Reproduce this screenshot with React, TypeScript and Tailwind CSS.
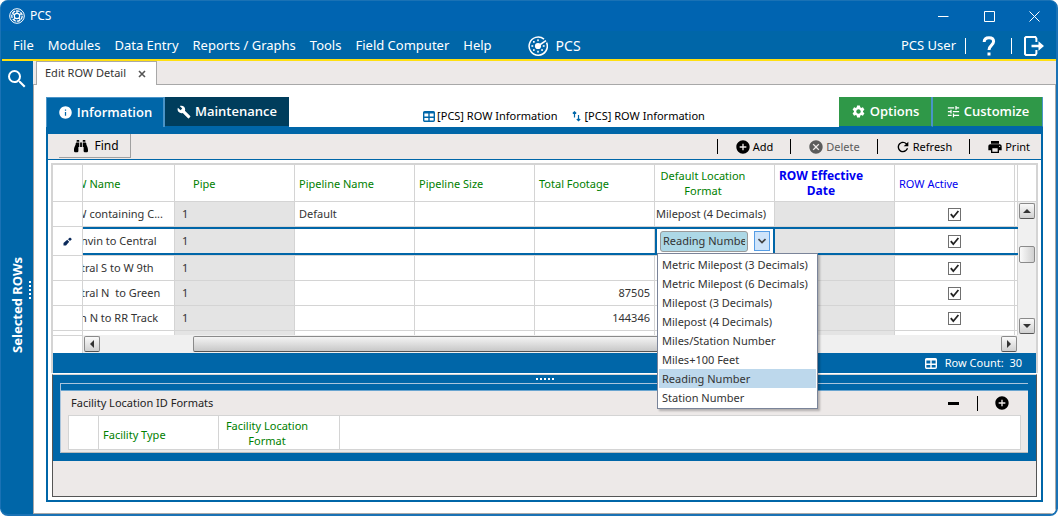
import type { ReactNode } from "react";
import {
  MdSearch,
  MdInfo,
  MdBuild,
  MdSettings,
  MdTune,
  MdAddCircle,
  MdCancel,
  MdRefresh,
  MdPrint,
} from "react-icons/md";
import { FaBinoculars } from "react-icons/fa";

const menus = ["File", "Modules", "Data Entry", "Reports / Graphs", "Tools", "Field Computer", "Help"];

const formats = [
  "Metric Milepost (3 Decimals)",
  "Metric Milepost (6 Decimals)",
  "Milepost (3 Decimals)",
  "Milepost (4 Decimals)",
  "Miles/Station Number",
  "Miles+100 Feet",
  "Reading Number",
  "Station Number",
];

type Row = { name: string; pipeline?: string; footage?: string; format?: string };

const rows: Row[] = [
  { name: "ROW containing C...", pipeline: "Default", format: "Milepost (4 Decimals)" },
  { name: "Chanvin to Central" },
  { name: "Central S to W 9th" },
  { name: "Central N \u00a0to Green", footage: "87505" },
  { name: "Main N to RR Track", footage: "144346" },
];

function WheelLogo() {
  return (
    <svg viewBox="0 0 16 16" className="size-4" fill="none" stroke="white" aria-hidden="true">
      <circle cx="8" cy="8" r="7.3" strokeWidth="1" />
      <circle cx="8" cy="8" r="5.2" strokeWidth="1.3" strokeDasharray="3.6 1" />
      <circle cx="8" cy="8" r="2.7" strokeWidth="1.2" />
      <path d="M8 5.3V3M10.3 6.8l2.2-1.4M9.8 10l1.6 2M6.2 10l-1.6 2M5.6 6.8L3.4 5.4" strokeWidth="1.2" />
    </svg>
  );
}

function RadarLogo() {
  return (
    <svg viewBox="0 0 20 20" className="size-5" fill="none" stroke="white" aria-hidden="true">
      <path d="M18.6 6.6A9.1 9.1 0 1 1 16 3.1" strokeWidth="1.5" />
      <path d="M10 10L18 4.6" strokeWidth="1.6" />
      <circle cx="10" cy="10" r="3.1" fill="white" stroke="none" />
      <g fill="white" stroke="none">
        <rect x="9.2" y="3.4" width="1.6" height="1.8" />
        <rect x="9.2" y="14.8" width="1.6" height="1.8" />
        <rect x="3.4" y="9.2" width="1.8" height="1.6" />
        <rect x="14.8" y="9.2" width="1.8" height="1.6" />
        <rect x="5" y="5" width="1.7" height="1.7" />
        <rect x="5" y="13.2" width="1.7" height="1.7" />
        <rect x="13.2" y="13.2" width="1.7" height="1.7" />
      </g>
    </svg>
  );
}

function TableIcon() {
  return (
    <svg viewBox="0 0 12 11" className="h-[11px] w-3 shrink-0" fill="none" stroke="currentColor" aria-hidden="true">
      <rect x="0.7" y="0.7" width="10.6" height="9.6" rx="1" strokeWidth="1.4" />
      <path d="M0.7 1.6H11.3" strokeWidth="1.8" />
      <path d="M6 2V10M1 6.2H11" strokeWidth="1.4" />
    </svg>
  );
}

function SortIcon() {
  return (
    <svg viewBox="0 0 9 11" className="h-[11px] w-[9px] shrink-0" fill="none" stroke="currentColor" strokeWidth="1.2" aria-hidden="true">
      <path d="M2.5 6.5V0.8M0.8 2.5L2.5 0.8L4.200 2.5M6.5 4V9.700M4.800 8L6.5 9.700L8.200 8" />
    </svg>
  );
}

function PencilIcon() {
  return (
    <svg viewBox="0 0 9 9" className="size-[9px]" fill="#0b2a5b" aria-hidden="true">
      <path d="M0.500 8.500V6L4.200 2.800L6.200 4.800L3 8.500Z" />
      <path d="M5 2.200L6.600 0.700H7.500L8.500 1.700V2.500L7 4.100Z" />
    </svg>
  );
}

function ExitIcon() {
  return (
    <svg viewBox="0 0 20 20" className="size-5" aria-hidden="true">
      <path d="M12.4 6V2.5L11.4 1H2L1 2v16l1 1h9.400l1-1.500V14" fill="none" stroke="white" strokeWidth="2" />
      <path d="M7.500 8.800h7V5.300L20 10l-5.500 4.700v-3.500h-7z" fill="white" />
    </svg>
  );
}

function Triangle({ d }: { d: string }) {
  return (
    <svg viewBox="0 0 8 8" className="size-2" fill="#333" aria-hidden="true">
      <path d={d} />
    </svg>
  );
}

function ScrollButton({ label, d }: { label: string; d: string }) {
  return (
    <button
      aria-label={label}
      className="flex h-4 w-4 shrink-0 items-center justify-center rounded-[2px] border border-[#8a8a8a] border-b-[#555] bg-gradient-to-b from-[#fafafa] to-[#d0d0d0]"
    >
      <Triangle d={d} />
    </button>
  );
}

function Bar({ className }: { className: string }) {
  return <span aria-hidden="true" className={`w-px shrink-0 ${className}`} />;
}

function Tool({ icon, children, muted }: { icon: ReactNode; children: string; muted?: boolean }) {
  return (
    <button className={`flex items-center gap-[2px] ${muted ? "text-[#5c5c5c]" : "text-black"}`}>
      {icon}
      {children}
    </button>
  );
}

function ActiveBox({ name }: { name: string }) {
  return (
    <label className="relative mx-auto flex size-[13px] items-center justify-center">
      <input
        type="checkbox"
        defaultChecked
        aria-label={`${name} active`}
        className="peer size-[13px] appearance-none border border-[#707070] bg-white"
      />
      <svg
        viewBox="0 0 13 13"
        className="pointer-events-none absolute inset-0 size-[13px] opacity-0 peer-checked:opacity-100"
        fill="none"
        stroke="#222"
        strokeWidth="1.8"
        aria-hidden="true"
      >
        <path d="M2.800 6.200L5.300 9.200L10.400 3" />
      </svg>
    </label>
  );
}

function FormatPicker() {
  return (
    <div className="relative flex h-full items-center gap-[6px] border-x-2 border-[#0066a8] bg-white px-[3px]">
      <select
        aria-label="Default location format"
        defaultValue="Reading Number"
        className="h-[21px] min-w-0 flex-1 appearance-none overflow-hidden rounded-[3px] border border-[#9a9a9a] bg-[#add8e6] px-[2px] text-clip text-[#333]"
      >
        {formats.map((f) => (
          <option key={f}>{f}</option>
        ))}
      </select>
      <button
        aria-label="Show formats"
        className="flex h-5 w-4 shrink-0 items-center justify-center border border-[#569de5] bg-[#cfe4fa]"
      >
        <svg viewBox="0 0 8 6" className="h-[6px] w-2" fill="none" stroke="#444" strokeWidth="1.600" aria-hidden="true">
          <path d="M0.500 1L4 4.500L7.500 1" />
        </svg>
      </button>
      <ul
        role="listbox"
        aria-label="Formats"
        className="absolute left-0 top-6 z-10 w-[161px] border border-[#7a8499] bg-white p-px shadow-[2px_2px_2px_rgba(0,0,0,0.25)]"
      >
        {formats.map((f) => (
          <li
            key={f}
            role="option"
            aria-selected={f === "Reading Number"}
            className="h-[19px] whitespace-nowrap pl-[3px] leading-[19px] text-[#333] aria-selected:bg-[#bdd8ec]"
          >
            {f}
          </li>
        ))}
      </ul>
    </div>
  );
}

function Grid() {
  const head = "border-b border-r border-[#d4d4d4] p-0 font-normal";
  return (
    <table className="w-full table-fixed border-separate border-spacing-0 text-[#333]">
      <colgroup>
        <col className="w-[30px]" />
        <col className="w-[92px]" />
        <col className="w-[120px]" />
        <col className="w-[120px]" />
        <col className="w-[120px]" />
        <col className="w-[120px]" />
        <col className="w-[120px]" />
        <col className="w-[120px]" />
        <col className="w-[120px]" />
        <col />
      </colgroup>
      <thead>
        <tr className="h-[37px] text-left leading-[15px] text-[#008000]">
          <th className={head} aria-label="Row state" />
          <th className={head}>
            <div className="overflow-hidden whitespace-nowrap">
              <div className="-ml-[22px]">ROW Name</div>
            </div>
          </th>
          <th className={head}>
            <div className="pl-[18px]">Pipe</div>
          </th>
          <th className={head}>
            <div className="pl-1">Pipeline Name</div>
          </th>
          <th className={head}>
            <div className="pl-1">Pipeline Size</div>
          </th>
          <th className={head}>
            <div className="pl-1">Total Footage</div>
          </th>
          <th className={head}>
            <div className="w-24 text-center">Default Location Format</div>
          </th>
          <th className={head}>
            <div className="w-[92px] text-center text-xs font-bold leading-[15px] text-[#0000f0]">ROW Effective Date</div>
          </th>
          <th className={head}>
            <div className="pl-1 text-[#0000f0]">ROW Active</div>
          </th>
          <th className={head} aria-label="Spare" />
        </tr>
      </thead>
      <tbody>
        {rows.map((r, i) => {
          const edit = i === 1;
          const cell = "border-b border-[#d4d4d4] p-0";
          const box = edit
            ? "flex h-7 items-stretch border-y-2 border-[#0066a8]"
            : "flex h-6 items-stretch";
          const inner = "flex min-w-0 flex-1 items-center overflow-hidden whitespace-nowrap border-r border-[#d4d4d4]";
          return (
            <tr key={r.name}>
              <td className={cell}>
                <div className={`flex items-center justify-center border-r border-[#d4d4d4] ${edit ? "h-7" : "h-6"}`}>
                  {edit && <PencilIcon />}
                </div>
              </td>
              <td className={cell}>
                <div className={box}>
                  <div className={inner}>
                    <span className="-ml-[22px]">{r.name}</span>
                  </div>
                </div>
              </td>
              <td className={`${cell} bg-[#e4e4e4]`}>
                <div className={box}>
                  <div className={`${inner} pl-[7px]`}>1</div>
                </div>
              </td>
              <td className={cell}>
                <div className={box}>
                  <div className={`${inner} pl-1`}>{r.pipeline}</div>
                </div>
              </td>
              <td className={cell}>
                <div className={box}>
                  <div className={inner} />
                </div>
              </td>
              <td className={cell}>
                <div className={box}>
                  <div className={`${inner} justify-end pr-1`}>{r.footage}</div>
                </div>
              </td>
              <td className={cell}>
                <div className={box}>
                  {edit ? (
                    <div className="min-w-0 flex-1">
                      <FormatPicker />
                    </div>
                  ) : (
                    <div className={`${inner} pl-px`}>{r.format}</div>
                  )}
                </div>
              </td>
              <td className={`${cell} bg-[#e4e4e4]`}>
                <div className={box}>
                  <div className={inner} />
                </div>
              </td>
              <td className={cell}>
                <div className={box}>
                  <div className={inner}>
                    <ActiveBox name={r.name} />
                  </div>
                </div>
              </td>
              <td className={cell}>
                <div className={box}>
                  <div className={inner} />
                </div>
              </td>
            </tr>
          );
        })}
        <tr className="h-1">
          {["a", "b", "c", "d", "e", "f", "g", "h", "i", "j"].map((k) => (
            <td
              key={k}
              className={`border-r border-[#d4d4d4] p-0 ${k === "c" || k === "h" ? "bg-[#e4e4e4]" : ""}`}
            />
          ))}
        </tr>
      </tbody>
    </table>
  );
}

export default function App() {
  return (
    <div className="min-h-screen bg-white font-['Noto_Sans','Open_Sans',sans-serif] text-[11px]">
      <div className="flex min-h-screen flex-col overflow-hidden rounded-lg border border-b-2 border-r-2 border-[#1a72b5] bg-[#0066a8]">
        <header className="text-white">
          <div className="flex h-[30px] items-center bg-[#0064b1] pl-2">
            <WheelLogo />
            <span className="ml-[5px] text-xs">PCS</span>
            <div className="ml-auto flex items-center">
              <button aria-label="Minimize" className="flex w-[46px] justify-center">
                <svg viewBox="0 0 11 11" className="size-[11px]" stroke="white" aria-hidden="true">
                  <path d="M0 5.500H10.500" />
                </svg>
              </button>
              <button aria-label="Maximize" className="flex w-[46px] justify-center">
                <svg viewBox="0 0 11 11" className="size-[11px]" fill="none" stroke="white" aria-hidden="true">
                  <path d="M0.500 0.500H10.500V10.500H0.500Z" />
                </svg>
              </button>
              <button aria-label="Close" className="flex w-11 justify-center">
                <svg viewBox="0 0 11 11" className="size-[11px]" stroke="white" aria-hidden="true">
                  <path d="M0.500 0.500L10.500 10.500M10.500 0.500L0.500 10.500" />
                </svg>
              </button>
            </div>
          </div>
          <div className="ml-px flex h-[30px] items-center border-b-2 border-[#ffdf10] bg-[#0066a8] pl-[11px] pr-3 pt-[2px] text-[13px]">
            <nav className="flex items-center gap-[14px]">
              {menus.map((m) => (
                <button key={m}>{m}</button>
              ))}
            </nav>
            <div className="ml-9 flex items-center gap-2 text-sm">
              <RadarLogo />
              PCS
            </div>
            <div className="ml-auto flex items-center">
              <span>PCS User</span>
              <Bar className="ml-[9px] h-4 bg-white" />
              <button aria-label="Help" className="ml-4 flex">
                <svg viewBox="0 0 14 20" className="h-5 w-[14px]" fill="none" stroke="white" aria-hidden="true">
                  <path d="M2.200 6C2.200 3 4.200 1.700 7 1.700S11.600 3.200 11.600 5.600C11.600 9 7 9.300 7 14" strokeWidth="3" />
                  <path d="M7 16.500V19.500" strokeWidth="3" />
                </svg>
              </button>
              <Bar className="ml-[15px] mr-3 h-4 bg-white" />
              <button aria-label="Log out" className="flex">
                <ExitIcon />
              </button>
            </div>
          </div>
        </header>

        <div className="flex flex-1">
          <aside className="relative flex w-8 shrink-0 flex-col items-center pr-px text-white">
            <button aria-label="Search" className="mt-[6px]">
              <MdSearch className="size-6" />
            </button>
            <div className="flex flex-1 items-center pt-1">
              <span className="rotate-180 text-[13px] font-bold leading-4 [writing-mode:vertical-rl]">Selected ROWs</span>
            </div>
            <div aria-hidden="true" className="absolute right-[2px] top-[220px] flex flex-col gap-[2px]">
              {[0, 1, 2, 3, 4].map((n) => (
                <span key={n} className="size-[2px] bg-white" />
              ))}
            </div>
          </aside>

          <div className="flex min-w-0 flex-1 flex-col bg-[#ede9e8]">
            <div className="flex h-6 items-end">
              <div className="h-full w-[3px] shrink-0 border-b border-[#a8a8a8]" />
              <div className="flex h-full items-center gap-[10px] border-x border-t border-[#a8a8a8] bg-white px-2 text-[#333]">
                Edit ROW Detail
                <button aria-label="Close tab" className="flex w-3 justify-center">
                  <svg viewBox="0 0 8 8" className="size-2" stroke="#555" strokeWidth="1.600" aria-hidden="true">
                    <path d="M1 1L7 7M7 1L1 7" />
                  </svg>
                </button>
              </div>
              <div className="h-full flex-1 border-b border-[#a8a8a8]" />
            </div>

            <main className="flex flex-1 flex-col border-x border-b border-[#a8a8a8] bg-white px-3 pb-[11px] pt-3">
              <div className="flex h-[30px] items-stretch font-['Open_Sans','Noto_Sans',sans-serif] text-[13px] font-semibold text-white">
                <button className="flex w-[119px] items-center justify-center gap-1 border-l border-r-2 border-t border-[#4a94c8] bg-[#0066a8]">
                  <MdInfo className="size-[15px]" />
                  Information
                </button>
                <button className="flex w-[124px] items-center justify-center gap-1 border-b border-[#0066a8] bg-[#003d5c]">
                  <MdBuild className="size-[14px]" />
                  Maintenance
                </button>
                <div className="flex flex-1 items-end justify-center gap-[14px] pb-1 font-['Noto_Sans','Open_Sans',sans-serif] text-[11px] font-normal leading-[14px] text-black">
                  <span className="flex items-center gap-[2px]">
                    <span className="text-[#0066a8]">
                      <TableIcon />
                    </span>
                    [PCS] ROW Information
                  </span>
                  <span className="flex items-center gap-1">
                    <span className="text-[#0066a8]">
                      <SortIcon />
                    </span>
                    [PCS] ROW Information
                  </span>
                </div>
                <button className="flex w-[94px] items-center justify-center gap-1 border-b border-r-2 border-b-[#0066a8] border-r-[#4a94c8] bg-[#2f9848]">
                  <MdSettings className="size-[15px]" />
                  Options
                </button>
                <button className="flex w-[110px] items-center justify-center gap-[3px] border-b border-r border-b-[#0066a8] border-r-[#4a94c8] bg-[#2f9848]">
                  <MdTune className="size-[15px]" />
                  Customize
                </button>
              </div>

              <section className="flex flex-1 flex-col border-2 border-t-[7px] border-[#0066a8]">
                <div className="flex h-[26px] shrink-0 items-center border-b border-[#0066a8] bg-[#ede9e8] px-[11px] leading-4">
                  <button className="flex h-6 w-[72px] items-center justify-center gap-[6px] self-start border-b border-r border-[#a0a0a0] pl-1 text-xs text-black">
                    <FaBinoculars className="size-[14px]" />
                    Find
                  </button>
                  <div className="ml-auto flex items-center gap-[17px]">
                    <Bar className="h-[15px] bg-black" />
                    <Tool icon={<MdAddCircle className="size-4" />}>Add</Tool>
                    <Bar className="h-[15px] bg-black" />
                    <Tool muted icon={<MdCancel className="size-4" />}>
                      Delete
                    </Tool>
                    <Bar className="h-[15px] bg-black" />
                    <Tool icon={<MdRefresh className="size-4" />}>Refresh</Tool>
                    <Bar className="h-[15px] bg-black" />
                    <Tool icon={<MdPrint className="size-4" />}>Print</Tool>
                  </div>
                </div>

                <div className="flex flex-1 flex-col px-[3px] pb-[3px] pt-[3px]">
                  <div className="border-x-2 border-t-2 border-[#d4d4d4]">
                    <div className="flex">
                      <div className="min-w-0 flex-1">
                        <Grid />
                      </div>
                      <div className="flex w-[18px] shrink-0 flex-col">
                        <div className="h-[37px] border-b border-[#d4d4d4]" />
                        <div className="flex flex-1 flex-col items-center bg-[#f0f0f0] py-px">
                          <ScrollButton label="Scroll up" d="M0 6L4 2L8 6Z" />
                          <div className="mt-[27px] h-[17px] w-4 rounded-[2px] border border-[#8a8a8a] bg-gradient-to-r from-[#fafafa] to-[#d0d0d0]" />
                          <div className="flex-1" />
                          <ScrollButton label="Scroll down" d="M0 2L4 6L8 2Z" />
                        </div>
                      </div>
                    </div>
                    <div className="flex h-[18px]">
                      <div className="w-[30px] shrink-0 border-r border-t border-[#d4d4d4]" />
                      <div className="flex min-w-0 flex-1 items-center bg-[#f0f0f0] px-px">
                        <ScrollButton label="Scroll left" d="M6 0L2 4L6 8Z" />
                        <div className="ml-[93px] h-4 w-[610px] rounded-[2px] border border-[#8a8a8a] border-b-[#555] bg-gradient-to-b from-[#f4f4f4] to-[#c8c8c8]" />
                        <div className="flex-1" />
                        <ScrollButton label="Scroll right" d="M2 0L6 4L2 8Z" />
                      </div>
                      <div className="w-[18px] shrink-0 bg-[#f0f0f0]" />
                    </div>
                    <div className="flex h-5 items-center justify-end gap-2 bg-[#0066a8] pr-[14px] text-white">
                      <TableIcon />
                      <span className="whitespace-pre">Row Count: {" "}30</span>
                    </div>
                  </div>

                  <div className="mx-px mt-px flex flex-1 flex-col border border-[#555] border-t-[#d4d4d4] bg-[#ede9e8]">
                    <div className="bg-[#0066a8] pb-2">
                      <div aria-hidden="true" className="flex h-2 items-center justify-center gap-[2px]">
                        {[0, 1, 2, 3, 4].map((n) => (
                          <span key={n} className="size-[2px] bg-white" />
                        ))}
                      </div>
                      <div className="ml-[7px] mr-2 border-l border-t border-[#a9c4dc]">
                        <div className="mt-[6px] border-b border-t border-b-[#bbb] border-t-[#6aa5d0] bg-[#ede9e8] px-[7px] pb-[2px]">
                          <div className="flex h-6 items-center text-[#222]">
                            <h2 className="pl-[3px] text-[11px]">Facility Location ID Formats</h2>
                            <div className="ml-auto flex items-center gap-4 pr-[11px] text-black">
                              <button aria-label="Remove format" className="flex">
                                <svg viewBox="0 0 16 16" className="size-4" aria-hidden="true">
                                  <path d="M3 7H14V10H3Z" />
                                </svg>
                              </button>
                              <Bar className="h-[15px] bg-black" />
                              <button aria-label="Add format" className="flex">
                                <MdAddCircle className="size-4" />
                              </button>
                            </div>
                          </div>
                          <table className="w-full table-fixed border-separate border-spacing-0 border border-[#d4d4d4] bg-white leading-[15px] text-[#008000]">
                            <colgroup>
                              <col className="w-[30px]" />
                              <col className="w-[120px]" />
                              <col className="w-[121px]" />
                              <col />
                            </colgroup>
                            <thead>
                              <tr className="h-[33px] text-left">
                                <th className="border-r border-[#d4d4d4] p-0" aria-label="Row state" />
                                <th className="border-r border-[#d4d4d4] p-0 pl-1 pt-[3px] font-normal">Facility Type</th>
                                <th className="border-r border-[#d4d4d4] p-0 font-normal">
                                  <div className="w-24 text-center">Facility Location Format</div>
                                </th>
                                <th className="p-0" aria-label="Spare" />
                              </tr>
                            </thead>
                          </table>
                        </div>
                      </div>
                    </div>
                  </div>
                </div>
              </section>
            </main>
          </div>
        </div>
      </div>
    </div>
  );
}
